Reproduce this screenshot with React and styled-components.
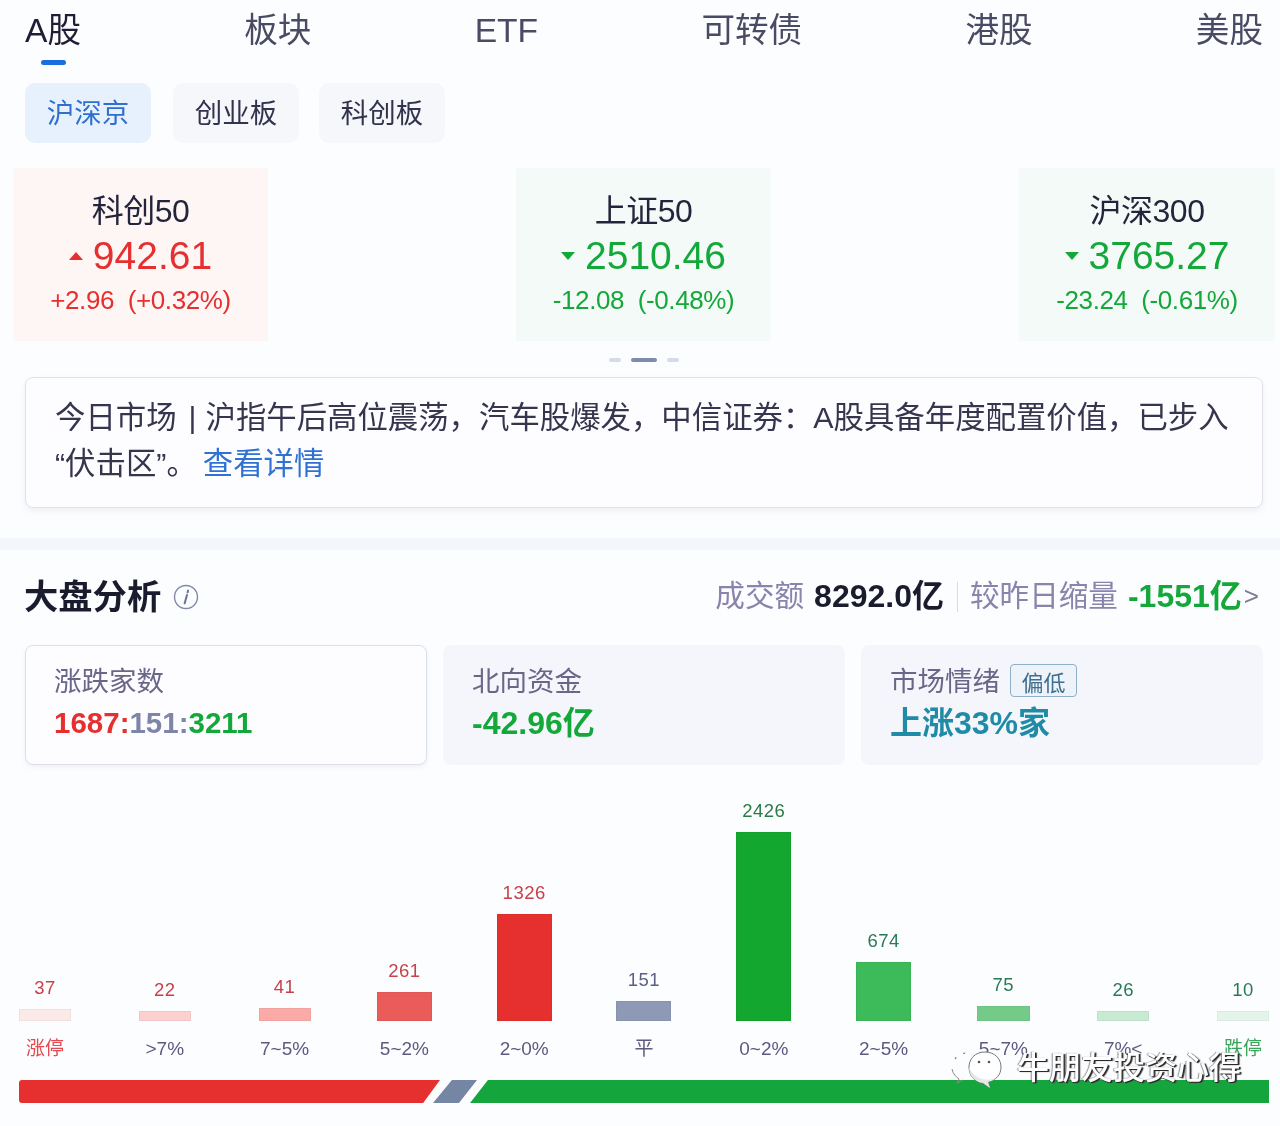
import React from "react";
import styled, { createGlobalStyle } from "styled-components";

const Global = createGlobalStyle`
  html, body { margin: 0; padding: 0; background: #fcfdff; }
  * { box-sizing: border-box; }
`;

const RED = "#e5302f";
const GREEN = "#14a83b";
const INK = "#24243c";

const Page = styled.div`
  position: relative;
  width: 1280px;
  height: 1126px;
  overflow: hidden;
  background: #fcfdff;
  font-family: "Liberation Sans", "Noto Sans CJK SC", sans-serif;
  color: ${INK};
  filter: blur(0.35px);
`;

const Tabs = styled.nav`
  display: flex;
  justify-content: space-between;
  padding: 12px 17px 0 25px;
  height: 83px;
`;
const Tab = styled.div`
  position: relative;
  height: 38px;
  font-size: 33.6px;
  line-height: 38px;
  color: ${(p) => (p.$active ? "#1e1e36" : "#4a4a64")};
  ${(p) =>
    p.$active &&
    `&::after {
      content: "";
      position: absolute;
      left: 16px;
      top: 48px;
      width: 25px;
      height: 5px;
      border-radius: 3px;
      background: #1a6fe0;
    }`}
`;

const Pills = styled.div`
  display: flex;
  padding-left: 25px;
  height: 60px;
`;
const Pill = styled.div`
  width: 126px;
  height: 60px;
  padding-bottom: 4px;
  margin-right: ${(p) => p.$gap}px;
  border-radius: 10px;
  background: ${(p) => (p.$active ? "#e6f1fd" : "#f5f7fb")};
  color: ${(p) => (p.$active ? "#2f6fd0" : "#33334d")};
  font-size: 27.5px;
  display: flex;
  align-items: center;
  justify-content: center;
`;

const Indexes = styled.div`
  display: flex;
  justify-content: space-between;
  padding: 0 5px 0 13px;
  margin-top: 25px;
  height: 173px;
`;
const IndexCard = styled.div`
  width: ${(p) => p.$w}px;
  height: 173px;
  background: ${(p) => (p.$up ? "#fdf6f5" : "#f4faf7")};
  color: ${(p) => (p.$up ? RED : GREEN)};
  display: flex;
  flex-direction: column;
  align-items: center;
`;
const IndexName = styled.div`
  margin-top: 25px;
  font-size: 32px;
  line-height: 36px;
  color: ${INK};
  letter-spacing: -0.5px;
`;
const IndexValue = styled.div`
  display: flex;
  align-items: center;
  gap: 10px;
  margin-top: 5px;
  font-size: 39px;
  line-height: 44px;
`;
const Caret = styled.span`
  width: 0;
  height: 0;
  border-left: 7.5px solid transparent;
  border-right: 7.5px solid transparent;
  ${(p) =>
    p.$up
      ? `border-bottom: 8px solid ${RED};`
      : `border-top: 8px solid ${GREEN};`}
`;
const IndexChange = styled.div`
  margin-top: 7px;
  font-size: 26px;
  line-height: 30px;
  white-space: pre;
  letter-spacing: -0.4px;
`;

const Dots = styled.div`
  display: flex;
  justify-content: center;
  gap: 10px;
  height: 4px;
  margin-top: 17px;
  padding-left: 8px;
`;
const Dot = styled.span`
  width: ${(p) => (p.$active ? 26 : 12)}px;
  height: 4px;
  border-radius: 2px;
  background: ${(p) => (p.$active ? "#7d8cab" : "#d5dbe8")};
`;

const Notice = styled.div`
  margin: 15px 17px 0 25px;
  height: 131px;
  padding: 16px 20px 0 29px;
  background: #fdfdff;
  border: 1px solid #dfe2ea;
  border-radius: 8px;
  box-shadow: 0 3px 6px rgba(120, 130, 160, 0.1);
  font-size: 30.4px;
  line-height: 46px;
  color: #35354e;
`;
const Pipe = styled.span`
  margin: 0 9px 0 12px;
`;
const Link = styled.span`
  color: #2f72d4;
  margin-left: 6px;
`;

const Divider = styled.div`
  height: 12px;
  margin-top: 30px;
  background: #f3f6fb;
`;

const Header = styled.div`
  display: flex;
  justify-content: space-between;
  align-items: center;
  height: 46px;
  margin-top: 24px;
  padding: 0 21px 0 24px;
`;
const TitleGroup = styled.div`
  display: flex;
  align-items: center;
  gap: 12px;
`;
const Title = styled.h2`
  margin: 0;
  font-size: 34.3px;
  line-height: 46px;
  font-weight: 700;
  color: #1b1b2e;
`;
const Summary = styled.div`
  display: flex;
  align-items: center;
  height: 46px;
  padding-bottom: 8px;
  font-size: 29.6px;
  color: #8a83ab;
  white-space: nowrap;
`;
const Strong = styled.b`
  margin-left: 10px;
  font-size: 32px;
  font-weight: 700;
  color: ${(p) => p.$color};
`;
const Sep = styled.span`
  width: 1px;
  height: 30px;
  margin: 8px 12px 0 13px;
  background: #d8dbe6;
`;
const Chevron = styled.span`
  margin-left: 2px;
  padding-top: 6px;
  font-size: 26px;
  color: #7d7a98;
`;

const Stats = styled.div`
  display: grid;
  grid-template-columns: repeat(3, 402px);
  gap: 16px;
  margin-top: 25px;
  padding-left: 25px;
`;
const Stat = styled.div`
  height: 120px;
  padding: 15px 0 0 28px;
  border-radius: 8px;
  background: ${(p) => (p.$outlined ? "#fdfdff" : "#f4f6fb")};
  border: 1px solid ${(p) => (p.$outlined ? "#dcdfe8" : "transparent")};
  box-shadow: ${(p) => (p.$outlined ? "0 2px 5px rgba(120,130,160,.1)" : "none")};
`;
const StatLabel = styled.div`
  display: flex;
  align-items: center;
  gap: 10px;
  height: 36px;
  font-size: 27.5px;
  color: #6a6688;
`;
const Badge = styled.span`
  width: 67px;
  height: 33px;
  margin-top: 3px;
  border: 1px solid #8fb0cb;
  border-radius: 4px;
  background: #eef3f9;
  color: #3f6f8f;
  font-size: 22px;
  display: flex;
  align-items: center;
  justify-content: center;
`;
const StatValue = styled.div`
  margin-top: 6px;
  font-size: ${(p) => p.$size || 29.5}px;
  line-height: 40px;
  font-weight: 700;
  color: ${(p) => p.$color || INK};
`;
const Part = styled.span`
  color: ${(p) => p.$color};
`;

const Chart = styled.div`
  display: flex;
  justify-content: space-between;
  align-items: flex-end;
  height: 295px;
  margin: 0 11px 0 19px;
`;
const Column = styled.div`
  width: 52px;
  display: flex;
  flex-direction: column;
  align-items: center;
`;
const BarValue = styled.div`
  font-size: 18.5px;
  line-height: 22px;
  margin-bottom: 10px;
  letter-spacing: 0.5px;
  color: ${(p) => p.$color};
`;
const Bar = styled.div`
  flex-shrink: 0;
  width: ${(p) => p.$w}px;
  border: 1px solid rgba(0, 0, 0, 0.04);
  background: ${(p) => p.$bg};
`;
const BarLabel = styled.div`
  margin-top: 17px;
  height: 22px;
  font-size: 19px;
  line-height: 22px;
  white-space: nowrap;
  color: ${(p) => p.$color || "#5c5a80"};
`;

const Ratio = styled.div`
  display: flex;
  height: 23px;
  margin: 20px 11px 0 19px;
`;
const Segment = styled.div`
  flex: ${(p) => (p.$grow ? "1" : `0 0 ${p.$w}px`)};
  margin-left: ${(p) => p.$ml || 0}px;
  background: ${(p) => p.$bg};
  border-radius: ${(p) => p.$radius || "0"};
  clip-path: polygon(${(p) => p.$poly});
`;

const Watermark = styled.div`
  position: absolute;
  left: 950px;
  top: 1046px;
  display: flex;
  align-items: center;
  gap: 15px;
  font-size: 32px;
  line-height: 44px;
  font-weight: 500;
  color: #fff;
  white-space: nowrap;
  text-shadow: 1px 1px 0 #2a2a2a, 2px 1px 1px #444, -1px 0 1px rgba(0, 0, 0, 0.45);
`;

const InfoIcon = () => (
  <svg width="26" height="26" viewBox="0 0 26 26" fill="none">
    <circle cx="13" cy="13" r="11.5" stroke="#8288a8" strokeWidth="1.4" />
    <path d="M15 6.6 L14.6 8.4 M14 11 L11.6 19.4" stroke="#6d7396" strokeWidth="2" strokeLinecap="round" />
  </svg>
);

const WeChat = () => (
  <svg width="52" height="42" viewBox="0 0 52 42" fill="none">
    <path d="M5 12 C9 7 13 6 17 6" stroke="#777" strokeWidth="1.2" strokeDasharray="2 8" />
    <path d="M2 22 C3 27 6 30 9 32 L7 36 L13 33" stroke="#8a8a8a" strokeWidth="1" />
    <path d="M35 5 C25 5 19 12 19 20 C19 29 25 35 33 36 L40 41 L38 35 C46 33 51 28 51 20 C51 12 45 5 35 5 Z" fill="#fff" stroke="#777" strokeWidth="1" />
    <path d="M19 20 C19 29 25 35 33 36 L40 41 L38 35 C41 34 44 33 46 31 C36 35 24 32 19 20 Z" fill="#e4e6e8" />
    <circle cx="29" cy="15" r="1.3" fill="#555" />
    <circle cx="39" cy="15" r="1.3" fill="#555" />
  </svg>
);

const tabs = ["A股", "板块", "ETF", "可转债", "港股", "美股"];
const pills = [
  { t: "沪深京", active: true, gap: 22 },
  { t: "创业板", gap: 20 },
  { t: "科创板", gap: 0 },
];
const indexes = [
  { name: "科创50", value: "942.61", change: "+2.96  (+0.32%)", up: true, w: 255 },
  { name: "上证50", value: "2510.46", change: "-12.08  (-0.48%)", w: 255 },
  { name: "沪深300", value: "3765.27", change: "-23.24  (-0.61%)", w: 256 },
];
const bars = [
  { v: "37", l: "涨停", h: 12, w: 52, bg: "#fbeae8", c: "#c8404a", lc: "#e5484d" },
  { v: "22", l: ">7%", h: 10, w: 52, bg: "#fbd0ce", c: "#c8404a" },
  { v: "41", l: "7~5%", h: 13, w: 52, bg: "#fbaaa8", c: "#c8404a" },
  { v: "261", l: "5~2%", h: 29, w: 55, bg: "#ea5c59", c: "#c8404a" },
  { v: "1326", l: "2~0%", h: 107, w: 55, bg: RED, c: "#c8404a" },
  { v: "151", l: "平", h: 20, w: 55, bg: "#8d99b5", c: "#5c5f85" },
  { v: "2426", l: "0~2%", h: 189, w: 55, bg: "#14a72f", c: "#2a7a45" },
  { v: "674", l: "2~5%", h: 59, w: 55, bg: "#3dba5a", c: "#2a7a55" },
  { v: "75", l: "5~7%", h: 15, w: 53, bg: "#74cb88", c: "#2a7a55" },
  { v: "26", l: "7%<", h: 10, w: 52, bg: "#c8ead2", c: "#2a7a55" },
  { v: "10", l: "跌停", h: 10, w: 52, bg: "#e4f4ea", c: "#2a7a55", lc: "#3aa55a" },
];

export default function App() {
  return (
    <Page>
      <Global />
      <Tabs>
        {tabs.map((t, i) => (
          <Tab key={t} $active={i === 0}>
            {t}
          </Tab>
        ))}
      </Tabs>
      <Pills>
        {pills.map((p) => (
          <Pill key={p.t} $active={p.active} $gap={p.gap}>
            {p.t}
          </Pill>
        ))}
      </Pills>
      <Indexes>
        {indexes.map((x) => (
          <IndexCard key={x.name} $up={x.up} $w={x.w}>
            <IndexName>{x.name}</IndexName>
            <IndexValue>
              <Caret $up={x.up} />
              {x.value}
            </IndexValue>
            <IndexChange>{x.change}</IndexChange>
          </IndexCard>
        ))}
      </Indexes>
      <Dots>
        <Dot />
        <Dot $active />
        <Dot />
      </Dots>
      <Notice>
        今日市场<Pipe>|</Pipe>沪指午后高位震荡，汽车股爆发，中信证券：A股具备年度配置价值，已步入
        <br />
        “伏击区”。
        <Link>查看详情</Link>
      </Notice>
      <Divider />
      <Header>
        <TitleGroup>
          <Title>大盘分析</Title>
          <InfoIcon />
        </TitleGroup>
        <Summary>
          成交额
          <Strong $color="#1b1b2e">8292.0亿</Strong>
          <Sep />
          较昨日缩量
          <Strong $color={GREEN}>-1551亿</Strong>
          <Chevron>&gt;</Chevron>
        </Summary>
      </Header>
      <Stats>
        <Stat $outlined>
          <StatLabel>涨跌家数</StatLabel>
          <StatValue>
            <Part $color={RED}>1687:</Part>
            <Part $color="#7d86a8">151:</Part>
            <Part $color={GREEN}>3211</Part>
          </StatValue>
        </Stat>
        <Stat>
          <StatLabel>北向资金</StatLabel>
          <StatValue $color={GREEN} $size={32}>-42.96亿</StatValue>
        </Stat>
        <Stat>
          <StatLabel>
            市场情绪<Badge>偏低</Badge>
          </StatLabel>
          <StatValue $color="#1f8ba6" $size={32}>上涨33%家</StatValue>
        </Stat>
      </Stats>
      <Chart>
        {bars.map((b) => (
          <Column key={b.l}>
            <BarValue $color={b.c}>{b.v}</BarValue>
            <Bar $w={b.w} $bg={b.bg} style={{ height: b.h }} />
            <BarLabel $color={b.lc}>{b.l}</BarLabel>
          </Column>
        ))}
      </Chart>
      <Ratio>
        <Segment $w={421} $bg={RED} $radius="3px 0 0 3px" $poly="0 0, 100% 0, 96% 100%, 0 100%" />
        <Segment $w={44} $ml={-7} $bg="#7486a4" $poly="43% 0, 100% 0, 59% 100%, 0 100%" />
        <Segment $grow $ml={-7} $bg="#14a63c" $poly="18px 0, 100% 0, 100% 100%, 0 100%" />
      </Ratio>
      <Watermark>
        <WeChat />
        牛朋友投资心得
      </Watermark>
    </Page>
  );
}
